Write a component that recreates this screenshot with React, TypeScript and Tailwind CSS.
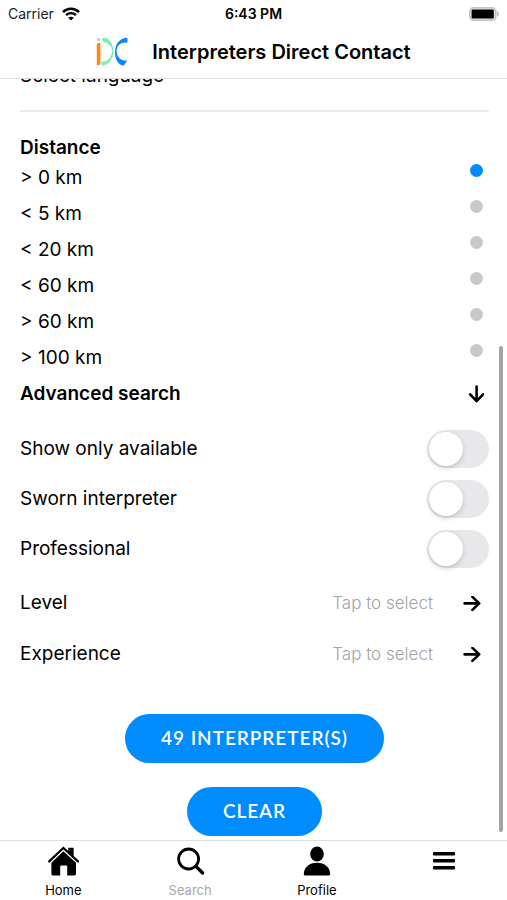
import { useState } from "react";
import type { ReactNode } from "react";
import clsx from "clsx";

interface Tab {
  label: string;
  icon: ReactNode;
  active?: boolean;
  hideLabel?: boolean;
}

const distances = ["> 0 km", "< 5 km", "< 20 km", "< 60 km", "> 60 km", "> 100 km"];
const filters = ["Show only available", "Sworn interpreter", "Professional"];
const selects = ["Level", "Experience"];

const tabs: Tab[] = [
  { label: "Home", icon: <HomeIcon /> },
  { label: "Search", icon: <SearchIcon />, active: true },
  { label: "Profile", icon: <ProfileIcon /> },
  { label: "Menu", icon: <MenuIcon />, hideLabel: true },
];

function WifiIcon() {
  return (
    <svg className="h-[14px] w-[18px]" viewBox="0 0 18 14" fill="none" stroke="black" aria-hidden="true">
      <path d="M1 5.1C5.4.6 12.6.6 17 5.1" strokeWidth="2.6" />
      <path d="M4 8.2c2.8-2.8 7.2-2.8 10 0" strokeWidth="2.4" />
      <path d="M9 13.6 6.2 10.8c1.5-1.4 4.1-1.4 5.6 0Z" fill="black" stroke="none" />
    </svg>
  );
}

function BatteryIcon() {
  return (
    <svg className="h-[14px] w-[30px]" viewBox="0 0 30 14" aria-hidden="true">
      <rect x=".8" y=".8" width="26" height="12.4" rx="3.6" fill="#e4e4e4" stroke="#c4c4c4" strokeWidth="1.6" />
      <rect x="2.6" y="2.4" width="22.2" height="9.2" rx="1.4" fill="black" />
      <path d="M28.2 4.6c2 .8 2 4 0 4.8Z" fill="#b0b0b0" />
    </svg>
  );
}

function Logo() {
  return (
    <svg className="h-8 w-8" viewBox="0 0 32 32" aria-hidden="true">
      <circle cx="2.6" cy="3.6" r="1.8" fill="#cfcaca" />
      <path d="M.8 7.6 4.4 6.6V27.2L3.4 29.6.8 28.8Z" fill="#ff8a0d" />
      <path
        d="M5.6 2.4C11-.2 17.4 6.4 17.4 15 17.4 23 12.6 29.4 5.6 29.8L5.2 25.6C11.6 26.4 16 21 16 15 16 10 12.6 6.6 7.4 6.2Z"
        fill="#7cf0b0"
      />
      <path
        d="M31.4 1.8V6.8C25.6 5.6 20.8 9.2 20.6 14.8 20.6 20.4 24.6 25.6 31.2 24.4L28 29.6C22.4 30 18.8 22.8 19 15.6 19.2 7.4 24.4 1.8 31.4 1.8Z"
        fill="#0d84fb"
      />
    </svg>
  );
}

function ArrowIcon({ className }: { className?: string }) {
  return (
    <svg
      className={clsx("h-4 w-[18px]", className)}
      viewBox="0 0 18 16"
      fill="none"
      stroke="black"
      strokeWidth="2.6"
      strokeLinecap="round"
      strokeLinejoin="round"
      aria-hidden="true"
    >
      <path d="M1.6 7.4h14.4M9.4.9 16.2 7.4l-6.8 6.5" />
    </svg>
  );
}

function HomeIcon() {
  return (
    <svg className="h-[30px] w-8" viewBox="0 0 32 30" aria-hidden="true">
      <path d="M21.2 1.8h5.4v10.4l-5.4-5Z" />
      <path d="M2.2 15.4 16.4 2 31 15.4" fill="none" stroke="black" strokeWidth="2.2" strokeLinecap="round" />
      <path d="M16.4 5.2 29 16.8v11a1.6 1.6 0 0 1-1.6 1.6h-7.2V20.4a1 1 0 0 0-1-1h-5a1 1 0 0 0-1 1v9H6a1.6 1.6 0 0 1-1.6-1.6v-11Z" />
    </svg>
  );
}

function SearchIcon() {
  return (
    <svg className="h-[30px] w-8" viewBox="0 0 32 30" fill="none" stroke="black" aria-hidden="true">
      <circle cx="14.6" cy="13" r="10" strokeWidth="2.8" />
      <path d="m22 20.4 6.6 6.6" strokeWidth="3.4" strokeLinecap="round" />
    </svg>
  );
}

function ProfileIcon() {
  return (
    <svg className="h-[30px] w-8" viewBox="0 0 32 30" aria-hidden="true">
      <ellipse cx="16" cy="8" rx="6.8" ry="7.4" />
      <path d="M2.8 28.2C2.8 21.4 8.4 16.8 16 16.8s13.2 4.6 13.2 11.4c0 .7-.5 1.2-1.2 1.2H4c-.7 0-1.2-.5-1.2-1.2Z" />
    </svg>
  );
}

function MenuIcon() {
  return (
    <svg className="h-[30px] w-8" viewBox="0 0 32 30" aria-hidden="true">
      <rect x="5" y="6" width="22" height="3.4" rx=".8" />
      <rect x="5" y="13" width="22" height="3.4" rx=".8" />
      <rect x="5" y="20" width="22" height="3.4" rx=".8" />
    </svg>
  );
}

function Header() {
  return (
    <header className="border-b border-[#dedede] bg-white pb-0.5">
      <div className="grid h-7 grid-cols-3 items-center px-2 text-sm">
        <div className="flex items-center gap-2 text-[#222222]">
          <span>Carrier</span>
          <WifiIcon />
        </div>
        <span className="text-center font-semibold">6:43 PM</span>
        <div className="flex justify-end">
          <BatteryIcon />
        </div>
      </div>
      <div className="flex h-12 items-center justify-center gap-6">
        <Logo />
        <h1 className="text-xl font-semibold">Interpreters Direct Contact</h1>
      </div>
    </header>
  );
}

function DistanceFilter() {
  const [distance, setDistance] = useState(distances[0]);

  return (
    <fieldset className="flex shrink-0 flex-col">
      <legend className="h-6 font-semibold leading-6">Distance</legend>
      {distances.map((item) => (
        <label key={item} className="flex h-9 items-start justify-between pr-1.5">
          <span className="leading-9">{item}</span>
          <input
            type="radio"
            name="distance"
            checked={distance === item}
            onChange={() => setDistance(item)}
            className="mt-1 size-[13px] appearance-none rounded-full bg-[#c9c9c9] checked:bg-[#008cff]"
          />
        </label>
      ))}
    </fieldset>
  );
}

function ToggleRow({ label }: { label: string }) {
  return (
    <label className="flex h-[50px] shrink-0 items-center justify-between">
      <span>{label}</span>
      <input
        type="checkbox"
        role="switch"
        className="flex h-[38px] w-[62px] appearance-none items-center rounded-full bg-[#e8e8ea] px-0.5 before:size-[34px] before:rounded-full before:bg-white before:shadow-[0_2px_5px_rgba(0,0,0,0.18)] checked:justify-end checked:bg-[#008cff]"
      />
    </label>
  );
}

function SelectRow({ label }: { label: string }) {
  return (
    <button type="button" className="flex h-[51px] w-full items-center pr-2 text-left">
      <span className="flex-1">{label}</span>
      <span className="text-[17px] font-light text-[#a3a3a3]">Tap to select</span>
      <ArrowIcon className="ml-7.5" />
    </button>
  );
}

function PillButton({ children }: { children: ReactNode }) {
  return (
    <button
      type="button"
      className="h-[49px] rounded-full bg-[#008cff] px-9 font-['Lato',sans-serif] text-[19px] font-semibold tracking-wider text-white"
    >
      {children}
    </button>
  );
}

function TabBar() {
  return (
    <nav className="grid h-[60px] shrink-0 grid-cols-4 border-t border-[#dedede] bg-white">
      {tabs.map((tab) => (
        <a key={tab.label} href="#" aria-label={tab.label} className="flex flex-col items-center gap-1 pt-[5px]">
          {tab.icon}
          {!tab.hideLabel && (
            <span className={clsx("text-[13px] leading-5", tab.active ? "text-[#a8a8a8]" : "text-black")}>
              {tab.label}
            </span>
          )}
        </a>
      ))}
    </nav>
  );
}

export default function App() {
  return (
    <div className="flex h-screen flex-col bg-white font-['Inter',sans-serif] text-black">
      <Header />

      {/* Scrolled to the end, so the language picker runs under the header */}
      <main className="relative flex min-h-0 flex-1 flex-col justify-end overflow-hidden pb-1 pl-5 pr-4.5 text-[19px]">
        <button type="button" className="h-7 shrink-0 text-left leading-7">
          Select language
        </button>
        <hr className="mb-6 mt-5 shrink-0 border-t-2 border-[#ebebeb]" />

        <DistanceFilter />

        <button type="button" className="mb-3 flex h-9 shrink-0 items-center justify-between pr-1 font-semibold">
          Advanced search
          <ArrowIcon className="rotate-90" />
        </button>

        {filters.map((label) => (
          <ToggleRow key={label} label={label} />
        ))}

        <div className="mt-1 shrink-0">
          {selects.map((label) => (
            <SelectRow key={label} label={label} />
          ))}
        </div>

        <div className="mt-[34px] flex shrink-0 flex-col items-center gap-6">
          <PillButton>49 INTERPRETER(S)</PillButton>
          <PillButton>CLEAR</PillButton>
        </div>

        <div className="absolute bottom-2 right-1 top-[267px] w-1 rounded-full bg-[#a3a3a3]" />
      </main>

      <TabBar />
    </div>
  );
}
